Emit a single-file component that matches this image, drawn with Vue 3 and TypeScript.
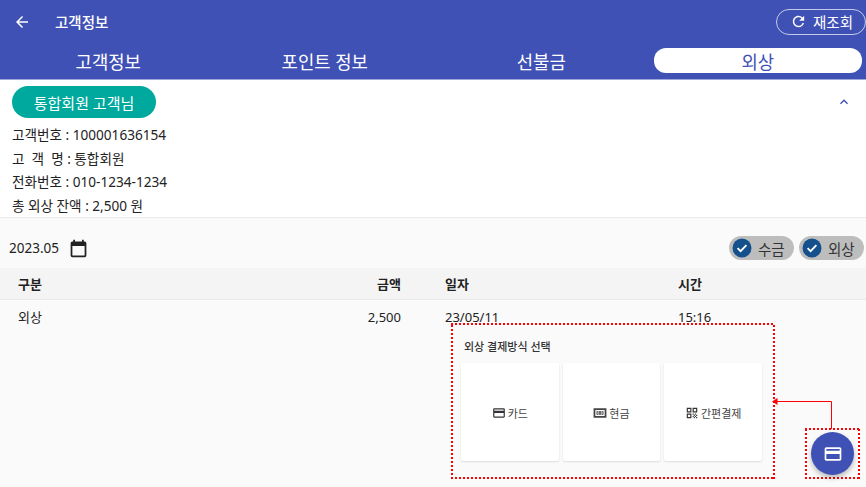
<template>
  <div class="page">
    <header class="appbar">
      <div class="toolbar">
        <svg class="back" viewBox="0 0 24 24" width="18" height="18">
          <path d="M20 11H7.83l5.59-5.59L12 4l-8 8 8 8 1.41-1.41L7.83 13H20z" fill="#fff" />
        </svg>
        <span class="title">고객정보</span>
        <button class="refresh">
          <svg viewBox="0 0 24 24" width="17" height="17">
            <path
              d="M17.65 6.35A7.958 7.958 0 0 0 12 4c-4.42 0-7.99 3.58-7.99 8s3.57 8 7.99 8c3.73 0 6.84-2.55 7.73-6h-2.08A5.99 5.99 0 0 1 12 18c-3.31 0-6-2.69-6-6s2.69-6 6-6c1.66 0 3.14.69 4.22 1.78L13 11h7V4l-2.35 2.35z"
              fill="#fff"
            />
          </svg>
          <span>재조회</span>
        </button>
      </div>
      <nav class="tabs">
        <div v-for="tab in tabs" :key="tab" class="tab" :class="{ active: tab === activeTab }">
          <span class="tab-label">{{ tab }}</span>
        </div>
      </nav>
    </header>

    <section class="customer">
      <div class="customer-top">
        <span class="chip">통합회원 고객님</span>
        <svg class="collapse" viewBox="0 0 24 24" width="16" height="16">
          <path d="M12 8l-6 6 1.41 1.41L12 10.83l4.59 4.58L18 14z" fill="#3f51b5" />
        </svg>
      </div>
      <div v-for="line in infoLines" :key="line" class="info-line">{{ line }}</div>
    </section>

    <section class="filter">
      <div class="month">
        <span>2023.05</span>
        <svg viewBox="0 0 24 24" width="21" height="21">
          <path
            d="M19 4h-1V2h-2v2H8V2H6v2H5a2 2 0 0 0-2 2v14a2 2 0 0 0 2 2h14a2 2 0 0 0 2-2V6a2 2 0 0 0-2-2zm0 16H5V9h14v11z"
            fill="#222"
          />
        </svg>
      </div>
      <div class="toggles">
        <span v-for="f in filters" :key="f" class="toggle">
          <svg viewBox="0 0 20 20" width="20" height="20">
            <circle cx="10" cy="10" r="9.5" fill="#14508c" />
            <path d="M5.6 10.2l3 3 5.8-6" fill="none" stroke="#fff" stroke-width="1.8" />
          </svg>
          <span>{{ f }}</span>
        </span>
      </div>
    </section>

    <div class="row head">
      <span>구분</span>
      <span class="amount">금액</span>
      <span>일자</span>
      <span>시간</span>
    </div>
    <div v-for="r in rows" :key="r.date + r.time" class="row">
      <span>{{ r.kind }}</span>
      <span class="amount">{{ r.amount }}</span>
      <span>{{ r.date }}</span>
      <span>{{ r.time }}</span>
    </div>

    <!-- overlay: payment method popup and annotation -->
    <div class="pay-panel dotted">
      <div class="pay-title">외상 결제방식 선택</div>
      <div class="pay-cards">
        <div class="pay-card">
          <svg viewBox="0 0 24 24" width="14" height="14">
            <path
              d="M20 4H4c-1.11 0-1.99.89-1.99 2L2 18c0 1.11.89 2 2 2h16c1.11 0 2-.89 2-2V6c0-1.11-.89-2-2-2zm0 14H4v-6h16v6zm0-10H4V6h16v2z"
              fill="#333"
            />
          </svg>
          <span>카드</span>
        </div>
        <div class="pay-card">
          <svg viewBox="0 0 24 24" width="14" height="14">
            <path
              fill-rule="evenodd"
              d="M1 4h22v16H1V4zm3 3v10h16V7H4zm2 2h3.4v6H6V9zm1.3 1.5v3h.8v-3h-.8zM10.3 9h3.4v6h-3.4V9zm1.3 1.5v3h.8v-3h-.8zM14.6 9H18v6h-3.4V9zm1.3 1.5v3h.8v-3h-.8z"
              fill="#444"
            />
          </svg>
          <span>현금</span>
        </div>
        <div class="pay-card">
          <svg viewBox="0 0 24 24" width="14" height="14">
            <path
              d="M3 11h8V3H3v8zm2-6h4v4H5V5zM3 21h8v-8H3v8zm2-6h4v4H5v-4zM13 3v8h8V3h-8zm6 6h-4V5h4v4zM13 13h2v2h-2zM15 15h2v2h-2zM13 17h2v2h-2zM15 19h2v2h-2zM17 17h2v2h-2zM17 13h2v2h-2zM19 15h2v2h-2zM19 19h2v2h-2z"
              fill="#333"
            />
          </svg>
          <span>간편결제</span>
        </div>
      </div>
    </div>

    <svg class="arrow" viewBox="0 0 62 32" width="62" height="32">
      <path d="M5 3.5H59.5V31" fill="none" stroke="#f00" stroke-width="1" />
      <path d="M0 3.5L5.5 0V7z" fill="#f00" />
    </svg>

    <div class="fab-mark dotted"></div>
    <button class="fab">
      <svg viewBox="0 0 24 24" width="20" height="20">
        <path
          d="M20 4H4c-1.11 0-1.99.89-1.99 2L2 18c0 1.11.89 2 2 2h16c1.11 0 2-.89 2-2V6c0-1.11-.89-2-2-2zm0 14H4v-6h16v6zm0-10H4V6h16v2z"
          fill="#fff"
        />
      </svg>
    </button>
  </div>
</template>

<script setup lang="ts">
const tabs = ['고객정보', '포인트 정보', '선불금', '외상']
const activeTab = '외상'

const infoLines = [
  '고객번호 : 100001636154',
  '고  객  명 : 통합회원',
  '전화번호 : 010-1234-1234',
  '총 외상 잔액 : 2,500 원',
]

const filters = ['수금', '외상']

const rows = [{ kind: '외상', amount: '2,500', date: '23/05/11', time: '15:16' }]
</script>

<style>
html,
body {
  margin: 0;
  overflow: hidden;
}
</style>

<style scoped>
.page {
  position: relative;
  width: 866px;
  height: 487px;
  overflow: hidden;
  background: #fafafa;
  color: #222;
  font-family: 'Noto Sans', 'Noto Sans CJK KR', sans-serif;
}

.appbar {
  background: #3f51b5;
  color: #fff;
  height: 80px;
  box-sizing: border-box;
  border-bottom: 1px solid #9fa8da;
}

.toolbar {
  display: flex;
  align-items: center;
  height: 43px;
  padding-left: 13px;
}

.title {
  margin-left: 24px;
  font-size: 14.5px;
  font-weight: 500;
}

.refresh {
  display: flex;
  align-items: center;
  gap: 6px;
  margin-left: auto;
  width: 90px;
  height: 26px;
  box-sizing: border-box;
  padding: 0 0 0 13px;
  border: 1px solid #c5cae9;
  border-radius: 13px;
  background: transparent;
  color: #fff;
  font: inherit;
  font-size: 14.5px;
}

.tabs {
  display: grid;
  grid-template-columns: repeat(4, 1fr);
  height: 36px;
  padding-top: 5px;
  box-sizing: border-box;
}

.tab {
  display: flex;
  justify-content: center;
  align-items: center;
  height: 25px;
  font-size: 17.8px;
  margin: 0 4px;
}

.tab.active {
  background: #fff;
  color: #3f51b5;
  border-radius: 12px;
}

.customer {
  background: #fff;
  height: 138px;
  box-sizing: border-box;
  padding: 6px 12px 0;
  border-bottom: 1px solid #eaeaea;
}

.customer-top {
  display: flex;
  justify-content: space-between;
  align-items: center;
  height: 32px;
  margin-bottom: 5px;
}

.chip {
  display: flex;
  align-items: center;
  justify-content: center;
  width: 144px;
  height: 32px;
  border-radius: 16px;
  background: #00a99d;
  color: #fff;
  font-size: 15px;
}

.collapse {
  margin-right: 2px;
}

.info-line {
  height: 23.7px;
  line-height: 23.7px;
  font-size: 13.6px;
  white-space: pre;
  color: #222;
}

.filter {
  display: flex;
  justify-content: space-between;
  align-items: center;
  height: 50px;
  padding: 10px 2px 0 9px;
  box-sizing: border-box;
}

.month {
  display: flex;
  align-items: center;
  gap: 9px;
  font-size: 13.5px;
}

.toggles {
  display: flex;
  gap: 5px;
}

.toggle {
  display: flex;
  align-items: center;
  gap: 6px;
  width: 65px;
  height: 24px;
  box-sizing: border-box;
  padding-left: 3px;
  border-radius: 12px;
  background: #bdbdbd;
  font-size: 14.5px;
  color: #333;
}

.row {
  display: grid;
  grid-template-columns: 18px 303px 80px 44px 233px 1fr;
  height: 33px;
  align-items: center;
  font-size: 13px;
}

.row::before {
  content: '';
}

.row.head {
  height: 32px;
  background: #f4f4f4;
  border-bottom: 1px solid #eaeaea;
  box-sizing: border-box;
  font-weight: 700;
}

.row span:nth-child(1) {
  grid-column: 2;
}

.row .amount {
  grid-column: 3;
  text-align: right;
}

.row span:nth-child(3) {
  grid-column: 5;
}

.row span:nth-child(4) {
  grid-column: 6;
}

/* square red dots, 2px on and 2px off, on all four sides */
.dotted {
  background-image:
    repeating-linear-gradient(90deg, #f00 0 2px, transparent 2px 4px),
    repeating-linear-gradient(90deg, #f00 0 2px, transparent 2px 4px),
    repeating-linear-gradient(0deg, #f00 0 2px, transparent 2px 4px),
    repeating-linear-gradient(0deg, #f00 0 2px, transparent 2px 4px);
  background-size:
    100% 2px,
    100% 2px,
    2px 100%,
    2px 100%;
  background-position:
    top left,
    bottom left,
    top left,
    top right;
  background-repeat: no-repeat;
}

.pay-panel {
  position: absolute;
  left: 451px;
  top: 323px;
  width: 324px;
  height: 156px;
  box-sizing: border-box;
  background-color: #fafafa;
  padding: 16px 13px 0 10px;
}

.pay-title {
  font-size: 11px;
  font-weight: 500;
  line-height: 15px;
  padding-left: 3px;
  color: #333;
}

.pay-cards {
  display: grid;
  grid-template-columns: repeat(3, 1fr);
  gap: 4px;
  margin-top: 9px;
}

.pay-card {
  display: flex;
  align-items: center;
  justify-content: center;
  gap: 2px;
  height: 98px;
  padding-top: 2px;
  box-sizing: border-box;
  background: #fff;
  border-radius: 2px;
  box-shadow: 0 1px 2px rgb(0 0 0 / 0.12);
  font-size: 11px;
  color: #444;
}

.arrow {
  position: absolute;
  left: 772px;
  top: 398px;
}

.fab-mark {
  position: absolute;
  left: 805px;
  top: 428px;
  width: 55px;
  height: 51px;
}

.fab {
  position: absolute;
  left: 811px;
  top: 432px;
  width: 43px;
  height: 43px;
  display: flex;
  align-items: center;
  justify-content: center;
  padding: 0;
  border: none;
  border-radius: 50%;
  background: #3f51b5;
  box-shadow: 0 3px 5px rgb(0 0 0 / 0.25);
}
</style>
